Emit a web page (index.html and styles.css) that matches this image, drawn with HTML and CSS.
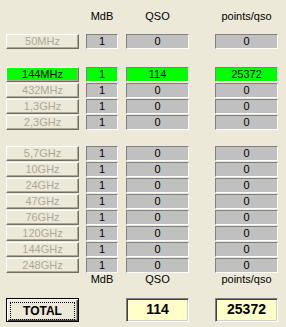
FILE: index.html
```html
<!DOCTYPE html>
<html lang="en">

<head>
    <meta charset="UTF-8" />
    <title>Band Totals</title>
    <link rel="stylesheet" href="styles.css">
</head>

<body>

    <div class="panel">
        <div class="row labels top">
            <span></span>
            <span class="label">MdB</span>
            <span class="label">QSO</span>
            <span class="label">points/qso</span>
        </div>

        <div class="row single">
            <div class="band off">50MHz</div>
            <div class="cell">1</div>
            <div class="cell">0</div>
            <div class="cell">0</div>
        </div>

        <div class="group first">
            <div class="row">
                <div class="band active">144MHz</div>
                <div class="cell on">1</div>
                <div class="cell on">114</div>
                <div class="cell on">25372</div>
            </div>
            <div class="row">
                <div class="band off">432MHz</div>
                <div class="cell">1</div>
                <div class="cell">0</div>
                <div class="cell">0</div>
            </div>
            <div class="row">
                <div class="band off">1,3GHz</div>
                <div class="cell">1</div>
                <div class="cell">0</div>
                <div class="cell">0</div>
            </div>
            <div class="row">
                <div class="band off">2,3GHz</div>
                <div class="cell">1</div>
                <div class="cell">0</div>
                <div class="cell">0</div>
            </div>
        </div>

        <div class="group second" id="microwave">
            <!-- filled from the band list below -->
        </div>

        <div class="row labels bottom">
            <span></span>
            <span class="label">MdB</span>
            <span class="label">QSO</span>
            <span class="label">points/qso</span>
        </div>

        <div class="row totals">
            <button class="total-btn"><span>TOTAL</span></button>
            <span></span>
            <div class="sum">114</div>
            <div class="sum">25372</div>
        </div>
    </div>

    <script>
        const bands = ['5,7GHz', '10GHz', '24GHz', '47GHz', '76GHz', '120GHz', '144GHz', '248GHz'];
        const area = document.getElementById('microwave');

        area.innerHTML = bands.map(name => `
            <div class="row">
                <div class="band off">${name}</div>
                <div class="cell">1</div>
                <div class="cell">0</div>
                <div class="cell">0</div>
            </div>
        `).join('');
    </script>

</body>

</html>
```

FILE: styles.css
```css
body {
    font-family: "Liberation Sans", Arial, sans-serif;
    font-size: 11px;
    background: #ece9d8;
    color: #000;
    margin: 0;
    padding: 0;
}

.panel {
    padding: 9px 0 0 6px;
}

.row {
    display: grid;
    grid-template-columns: 80px 40px 89px 63px;
    height: 15px;
}

.group {
    display: flex;
    flex-direction: column;
    gap: 1px;
}

.single {
    margin-top: 11px;
}

.group.first {
    margin-top: 18px;
}

.group.second {
    margin-top: 16px;
}

.labels {
    height: 14px;
    line-height: 14px;
}

.labels.bottom {
    height: 12px;
    line-height: 12px;
}

.label {
    text-align: center;
}

.labels .label:nth-child(2) {
    width: 32px;
}

.labels .label:nth-child(3) {
    width: 63px;
}

.band {
    box-sizing: border-box;
    width: 73px;
    height: 15px;
    line-height: 13px;
    text-align: center;
    border-top: 1px solid #fff;
    border-left: 1px solid #fff;
    border-right: 1px solid #716f64;
    border-bottom: 1px solid #716f64;
    box-shadow: inset -1px -1px 0 #aca899;
}

.band.off {
    color: #aca899;
}

.band.active {
    background: #00ff00;
    color: #000;
}

.cell {
    box-sizing: border-box;
    height: 15px;
    line-height: 13px;
    text-align: center;
    background: #c0c0c0;
    border-top: 1px solid #808080;
    border-left: 1px solid #808080;
    border-right: 1px solid #fff;
    border-bottom: 1px solid #fff;
}

.cell:nth-child(2) {
    width: 32px;
}

.cell:nth-child(3),
.cell:nth-child(4) {
    width: 63px;
}

.cell.on {
    background: #00ff00;
}

.totals {
    margin-top: 13px;
    height: 24px;
}

.total-btn {
    box-sizing: border-box;
    width: 73px;
    height: 24px;
    padding: 3px;
    background: #ece9d8;
    border: 1px solid #000;
    box-shadow: inset 1px 1px 0 #fff, inset -1px -1px 0 #404040, inset -2px -2px 0 #aca899;
    font-family: "Liberation Sans", Arial, sans-serif;
    font-size: 12px;
    font-weight: bold;
    color: #000;
}

.total-btn span {
    display: block;
    height: 16px;
    line-height: 16px;
    border: 1px dotted #000;
}

.sum {
    box-sizing: border-box;
    width: 63px;
    height: 24px;
    line-height: 20px;
    text-align: center;
    font-size: 14px;
    font-weight: bold;
    background: #ffffc8;
    border-top: 1px solid #808080;
    border-left: 1px solid #808080;
    border-right: 1px solid #fff;
    border-bottom: 1px solid #fff;
    box-shadow: inset 1px 1px 0 #404040, inset -1px -1px 0 #d4d0c8;
}
```
